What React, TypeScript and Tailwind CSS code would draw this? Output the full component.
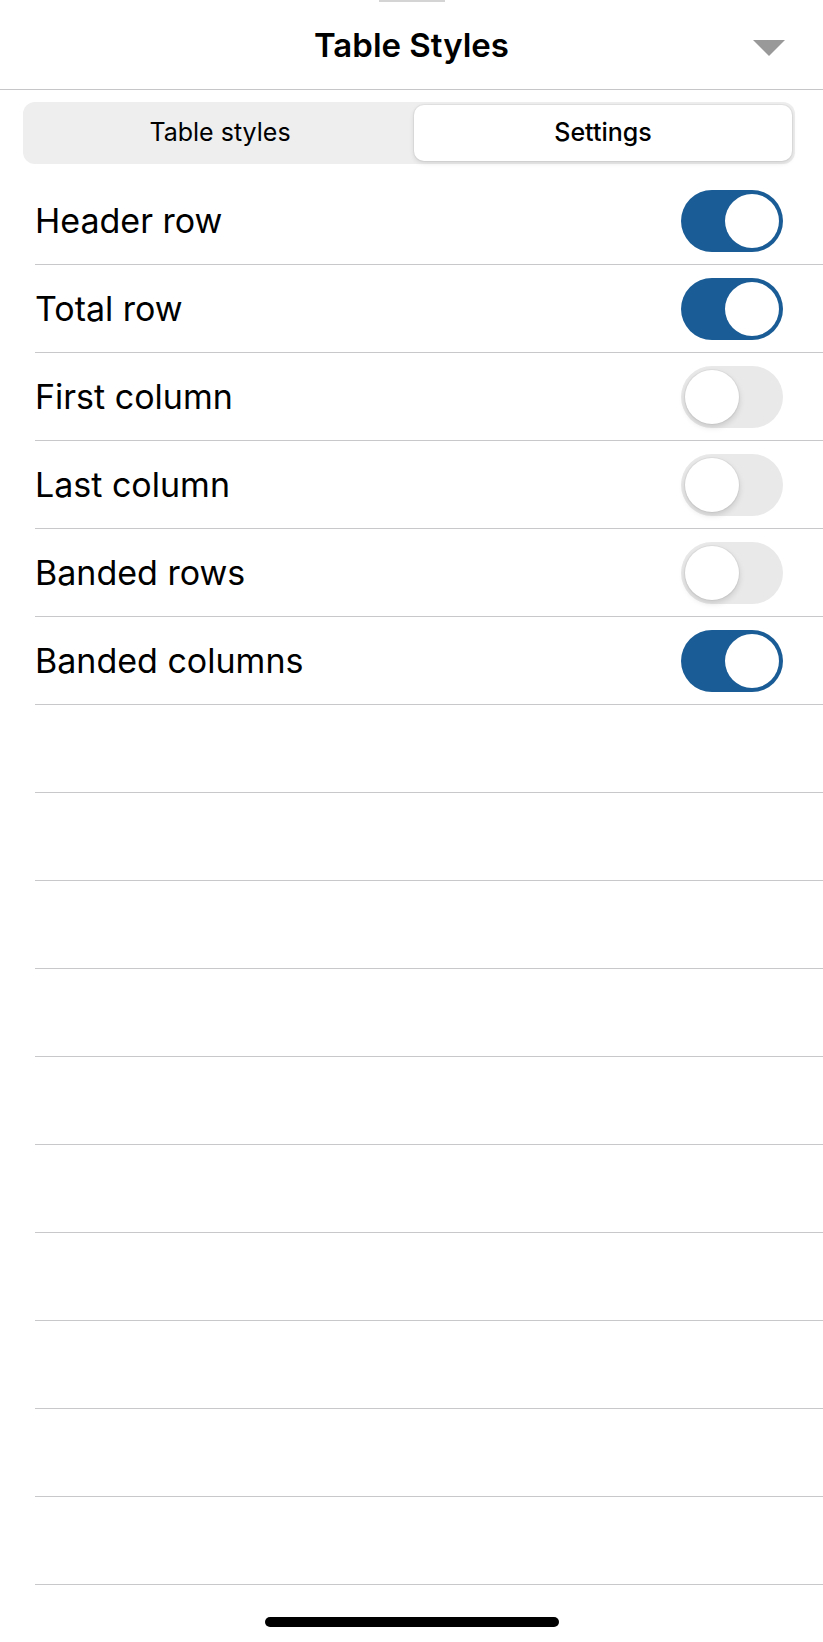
import { useState } from "react";

type Setting = {
  label: string;
  on: boolean;
};

const initialSettings: Setting[] = [
  { label: "Header row", on: true },
  { label: "Total row", on: true },
  { label: "First column", on: false },
  { label: "Last column", on: false },
  { label: "Banded rows", on: false },
  { label: "Banded columns", on: true },
];

function Toggle({ on, onClick }: { on: boolean; onClick: () => void }) {
  return (
    <button
      onClick={onClick}
      className={`relative w-[102px] h-[62px] rounded-full shrink-0 transition-colors ${
        on ? "bg-[#1a5c95]" : "bg-[#e9e9ea]"
      }`}
    >
      <span
        className={`absolute top-[4px] w-[54px] h-[54px] rounded-full bg-white transition-all ${
          on
            ? "left-[44px]"
            : "left-[4px] shadow-[0_3px_6px_rgba(0,0,0,0.15),0_0_0_1px_rgba(0,0,0,0.04)]"
        }`}
      />
    </button>
  );
}

export default function App() {
  const [settings, setSettings] = useState(initialSettings);
  const [tab, setTab] = useState(1);

  const toggle = (index: number) => {
    setSettings((prev) =>
      prev.map((s, i) => (i === index ? { ...s, on: !s.on } : s))
    );
  };

  return (
    <div className="w-[823px] h-[1642px] bg-white flex flex-col font-['Inter',sans-serif] text-black overflow-hidden">
      {/* grabber */}
      <div className="flex justify-center">
        <div className="w-[66px] h-[2px] bg-[#d4d4d4]" />
      </div>

      {/* Header */}
      <div className="h-[88px] flex items-center justify-center relative border-b border-[#c6c6c8]">
        <h1 className="text-[33px] font-semibold">Table Styles</h1>
        <svg
          className="absolute right-[38px] top-[38px]"
          width="32"
          height="16"
          viewBox="0 0 32 16"
        >
          <polygon points="0,0 32,0 16,16" fill="#999999" />
        </svg>
      </div>

      {/* Segmented control */}
      <div className="pl-[23px] pr-[28px] pt-[12px]">
        <div className="h-[62px] rounded-[12px] bg-[#eeeeef] p-[3px] flex">
          {["Table styles", "Settings"].map((label, index) => (
            <button
              key={label}
              onClick={() => setTab(index)}
              className={`rounded-[10px] text-[25px] ${
                index === 0 ? "flex-1" : "w-[378px]"
              } ${
                index === tab
                  ? "bg-white font-medium shadow-[0_2px_5px_rgba(0,0,0,0.12),0_0_0_1px_rgba(0,0,0,0.04)]"
                  : ""
              }`}
            >
              {label}
            </button>
          ))}
        </div>
      </div>

      {/* Rows */}
      <div className="pl-[35px] pt-[13px]">
        {settings.map((s, index) => (
          <div
            key={s.label}
            className="h-[88px] flex items-center justify-between pr-[40px] border-b border-[#c8c8ca]"
          >
            <span className="text-[34px]">{s.label}</span>
            <Toggle on={s.on} onClick={() => toggle(index)} />
          </div>
        ))}
        {Array.from({ length: 10 }).map((_, index) => (
          <div key={index} className="h-[88px] border-b border-[#c8c8ca]" />
        ))}
      </div>

      {/* Home indicator */}
      <div className="flex justify-center pt-[32px]">
        <div className="w-[294px] h-[10px] rounded-full bg-black" />
      </div>
    </div>
  );
}
